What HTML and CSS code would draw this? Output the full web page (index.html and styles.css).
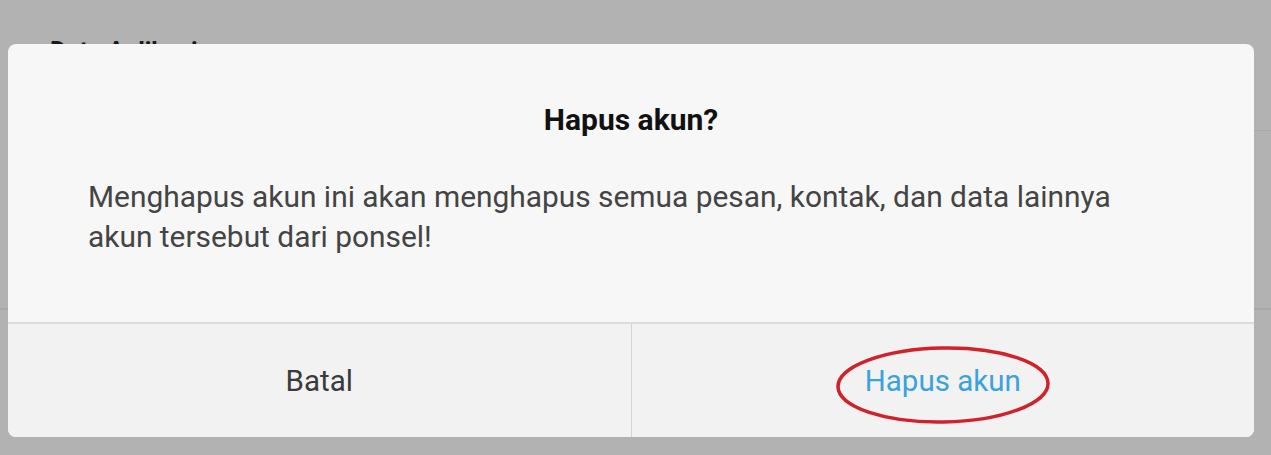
FILE: index.html
```html
<!DOCTYPE html>
<html>
<head>
  <title>Hapus akun</title>
  <link rel="stylesheet" href="styles.css">
</head>
<body>
  <div class="backdrop">
    <div class="behind-title">Data Aplikasi</div>
    <div class="behind-line short"></div>
    <div class="behind-line low"></div>
  </div>

  <div class="dialog">
    <div class="dialog-body">
      <h2 class="dialog-title">Hapus akun?</h2>
      <p class="dialog-message">Menghapus akun ini akan menghapus semua pesan, kontak, dan data lainnya akun tersebut dari ponsel!</p>
    </div>
    <div class="dialog-actions">
      <button class="btn" type="button">Batal</button>
      <button class="btn btn-danger" type="button">
        Hapus akun
        <svg class="circle-mark" width="220" height="84" viewBox="0 0 220 84">
          <ellipse cx="110" cy="42" rx="105" ry="37" fill="none" stroke="#d1212b" stroke-width="3.5" transform="rotate(-1 110 42)"/>
        </svg>
      </button>
    </div>
  </div>
</body>
</html>
```

FILE: styles.css
```css
body {
  margin: 0;
  width: 1271px;
  height: 455px;
  overflow: hidden;
  background-color: #b2b2b2;
  font-family: Roboto, "Noto Sans", sans-serif;
  position: relative;
}

/* faded settings screen behind the dialog */
.backdrop {
  padding: 39px 0 0 50px;
}

.behind-title {
  font-size: 25px;
  line-height: 25px;
  font-weight: bold;
  color: #1a1a1a;
  height: 91px;
}

.behind-line {
  height: 1px;
  background-color: #a8a8a8;
  margin-left: -50px;
}

.behind-line.short {
  margin-left: 1200px;
}

.behind-line.low {
  height: 2px;
  margin-top: 177px;
}

.dialog {
  position: absolute;
  left: 8px;
  top: 44px;
  width: 1246px;
  height: 393px;
  background-color: #f7f7f7;
  border-radius: 8px;
  overflow: hidden;
  display: flex;
  flex-direction: column;
}

.dialog-body {
  height: 278px;
  border-bottom: 2px solid #dcdcdc;
  padding: 0 110px 0 80px;
}

.dialog-title {
  margin: 58px 0 0;
  font-size: 30px;
  font-weight: bold;
  color: #111;
  text-align: center;
  line-height: 36px;
  padding-left: 30px;
}

.dialog-message {
  margin: 39px 0 0;
  font-size: 29.9px;
  line-height: 40px;
  color: #444;
}

.dialog-actions {
  flex: 1;
  display: flex;
  background-color: #f2f2f2;
}

.btn {
  flex: 1;
  border: none;
  background: none;
  font-family: Roboto, "Noto Sans", sans-serif;
  font-size: 29.5px;
  color: #3a3a3a;
  position: relative;
  padding: 0;
}

.btn + .btn {
  border-left: 1px solid #d4d4d4;
}

.btn-danger {
  color: #3ba3dc;
}

.circle-mark {
  position: absolute;
  left: 50%;
  top: 50%;
  margin-left: -110px;
  margin-top: -38px;
}
```
